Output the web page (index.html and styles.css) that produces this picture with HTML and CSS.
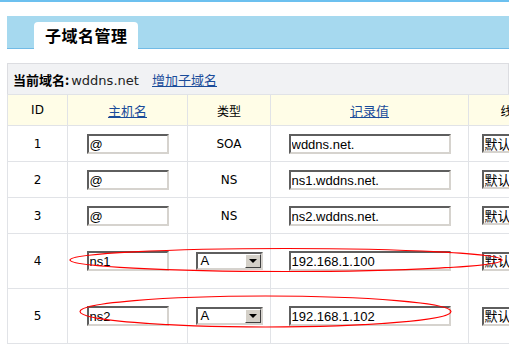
FILE: index.html
```html
<!DOCTYPE html>
<html lang="zh-CN">
<head>
  <meta charset="UTF-8" />
  <title>子域名管理</title>
  <link rel="stylesheet" href="styles.css">
</head>
<body>
  <div class="topline"></div>
  <div class="page">
    <div class="tabbar">
      <div class="tab">子域名管理</div>
    </div>

    <div class="infobar">
      <b>当前域名:</b><span class="domain">wddns.net</span>
      <a href="#" class="add-link">增加子域名</a>
    </div>

    <table class="records">
      <colgroup>
        <col class="c-id">
        <col class="c-host">
        <col class="c-type">
        <col class="c-value">
        <col class="c-line">
        <col class="c-more">
      </colgroup>
      <tr class="head">
        <td>ID</td>
        <td><a href="#">主机名</a></td>
        <td class="cjk">类型</td>
        <td><a href="#">记录值</a></td>
        <td class="cjk">线路</td>
        <td></td>
      </tr>
      <tr>
        <td>1</td>
        <td><input class="field host" type="text" value="@"></td>
        <td>SOA</td>
        <td><input class="field value" type="text" value="wddns.net."></td>
        <td><span class="combo line"><span class="val">默认</span></span></td>
        <td></td>
      </tr>
      <tr>
        <td>2</td>
        <td><input class="field host" type="text" value="@"></td>
        <td>NS</td>
        <td><input class="field value" type="text" value="ns1.wddns.net."></td>
        <td><span class="combo line"><span class="val">默认</span></span></td>
        <td></td>
      </tr>
      <tr>
        <td>3</td>
        <td><input class="field host" type="text" value="@"></td>
        <td>NS</td>
        <td><input class="field value" type="text" value="ns2.wddns.net."></td>
        <td><span class="combo line"><span class="val">默认</span></span></td>
        <td></td>
      </tr>
      <tr class="tall">
        <td>4</td>
        <td><input class="field host" type="text" value="ns1"></td>
        <td><span class="combo type"><span class="val">A</span><span class="drop"></span></span></td>
        <td><input class="field value" type="text" value="192.168.1.100"></td>
        <td><span class="combo line"><span class="val">默认</span></span></td>
        <td></td>
      </tr>
      <tr class="tall">
        <td>5</td>
        <td><input class="field host" type="text" value="ns2"></td>
        <td><span class="combo type"><span class="val">A</span><span class="drop"></span></span></td>
        <td><input class="field value" type="text" value="192.168.1.102"></td>
        <td><span class="combo line"><span class="val">默认</span></span></td>
        <td></td>
      </tr>
    </table>
  </div>

  <!-- hand-drawn marks over rows 4 and 5 -->
  <svg class="marks" width="509" height="344" viewBox="0 0 509 344">
    <ellipse cx="286" cy="260" rx="216" ry="11.5" />
    <ellipse cx="265.5" cy="311.5" rx="185.5" ry="15.5" />
  </svg>
</body>
</html>
```

FILE: styles.css
```css
body {
  margin: 0;
  width: 509px;
  height: 344px;
  overflow: hidden;
  position: relative;
  background: #fff;
  font-family: "DejaVu Sans", "Noto Sans CJK SC", sans-serif;
  font-size: 12px;
  color: #000;
}

.topline {
  height: 2px;
  background-color: #6cc0ef;
}

.page {
  padding: 14px 0 0 7px;
}

.tabbar {
  display: flex;
  align-items: flex-end;
  height: 32px;
  background-color: #a6d9ef;
  border-bottom: 1px solid #72bbe6;
}

.tab {
  margin: 0 0 -1px 27px;
  width: 93px;
  height: 27px;
  padding-left: 11px;
  background: #fff;
  border-radius: 4px 4px 0 0;
  font-family: "Noto Sans CJK SC", sans-serif;
  font-weight: 700;
  font-size: 16px;
  letter-spacing: 0.5px;
  line-height: 27px;
}

.infobar {
  margin-top: 14px;
  height: 30px;
  line-height: 31px;
  padding-left: 5px;
  background-color: #f1f2f4;
  border: 1px solid #dcdde1;
  border-bottom: none;
  font-size: 13px;
}

.infobar b {
  font-family: "Noto Sans CJK SC", sans-serif;
}

.domain {
  font-family: "DejaVu Sans", sans-serif;
  color: #222;
  margin-left: 2px;
}

.add-link {
  margin-left: 9px;
  font-family: "Noto Sans CJK SC", sans-serif;
  color: #1a4c9a;
}

.records {
  border-collapse: collapse;
  table-layout: fixed;
  width: 700px;
}

.c-id { width: 60px; }
.c-host { width: 120px; }
.c-type { width: 83px; }
.c-value { width: 198px; }
.c-line { width: 88px; }

.records td {
  border: 1px solid #e1e3e7;
  text-align: center;
  padding: 0;
  height: 35px;
}

.records .head td {
  height: 30px;
  background-color: #fffde7;
  font-size: 12px;
}

.records .head a {
  font-family: "Noto Sans CJK SC", sans-serif;
  font-size: 13px;
  color: #1a4c9a;
}

.cjk {
  font-family: "Noto Sans CJK SC", sans-serif;
}

.records .tall td {
  height: 54px;
}

.field {
  box-sizing: border-box;
  height: 20px;
  padding: 1px 1px 0;
  border: 2px solid;
  border-color: #5e5e5e #d6d3ce #d6d3ce #5e5e5e;
  font-family: "Liberation Sans", sans-serif;
  font-size: 13px;
  color: #000;
  background: #fff;
  vertical-align: middle;
}

.field.host { width: 82px; }
.field.value { width: 162px; }

.combo {
  box-sizing: border-box;
  display: inline-flex;
  align-items: center;
  height: 18px;
  border: 2px solid;
  border-color: #5e5e5e #d6d3ce #d6d3ce #5e5e5e;
  background: #fff;
  vertical-align: middle;
  text-align: left;
}

.combo .val {
  flex: 1;
  padding-left: 3px;
  font-size: 13px;
  line-height: 14px;
}

.combo.type {
  width: 67px;
}

.combo.type .val {
  font-family: "Liberation Sans", sans-serif;
}

.combo.line {
  width: 62px;
  height: 19px;
}

.combo.line .val {
  padding-left: 1px;
  font-family: "Noto Sans CJK SC", sans-serif;
}

.drop {
  position: relative;
  width: 16px;
  height: 14px;
  box-sizing: border-box;
  background: #d4d0c8;
  border: 1px solid;
  border-color: #fff #404040 #404040 #fff;
}

.drop::after {
  content: "";
  position: absolute;
  left: 3px;
  top: 4px;
  border-left: 4px solid transparent;
  border-right: 4px solid transparent;
  border-top: 4px solid #000;
}

.marks {
  position: absolute;
  left: 0;
  top: 0;
  pointer-events: none;
}

.marks ellipse {
  fill: none;
  stroke: #ff0000;
  stroke-width: 1.2;
}
```
